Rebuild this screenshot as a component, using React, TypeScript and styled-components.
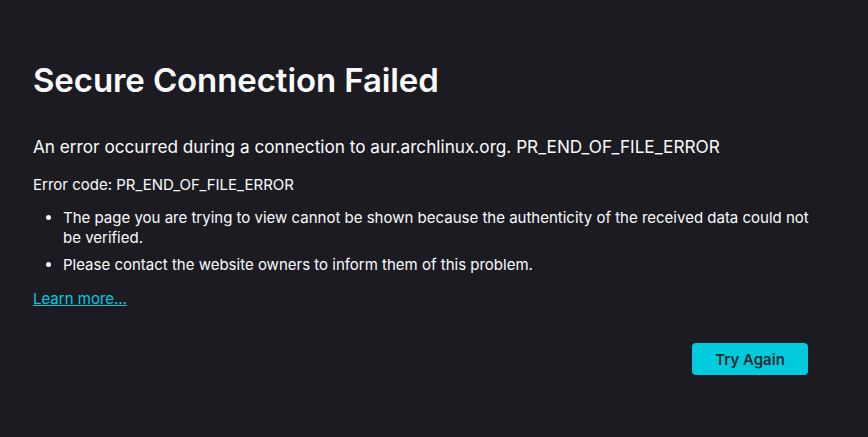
import React from 'react';
import styled, { createGlobalStyle } from 'styled-components';

const Global = createGlobalStyle`
  html, body {
    margin: 0;
    padding: 0;
    background: #1c1b22;
    color: #fbfbfe;
    font-family: Inter, "Noto Sans", sans-serif;
  }
`;

const Page = styled.main`
  width: 868px;
  height: 437px;
  box-sizing: border-box;
  padding: 58px 0 0 33px;
`;

const Container = styled.div`
  width: 785px;
  display: flex;
  flex-direction: column;
`;

const Title = styled.h1`
  margin: 0;
  font-size: 33px;
  font-weight: 600;
  line-height: 44px;
  letter-spacing: -0.1px;
`;

const ShortDesc = styled.p`
  margin: 33px 0 0;
  font-size: 17.2px;
  line-height: 24px;
`;

const ErrorCode = styled.p`
  margin: 16px 0 0;
  font-size: 15px;
  line-height: 20px;
`;

const List = styled.ul`
  margin: 13px 0 0;
  padding-left: 30px;
  font-size: 15px;
  line-height: 20px;

  li + li {
    margin-top: 7px;
  }
`;

const LearnMore = styled.a`
  margin-top: 14px;
  align-self: flex-start;
  color: #00cbe0;
  font-size: 15px;
  line-height: 20px;
  text-decoration: underline;
`;

const Actions = styled.div`
  display: flex;
  justify-content: flex-end;
  margin-top: 34px;
  padding-right: 10px;
`;

const Button = styled.button`
  width: 116px;
  height: 32px;
  border: none;
  border-radius: 4px;
  background: #00cadb;
  color: #2b2a33;
  font-family: Inter, sans-serif;
  font-size: 15px;
  font-weight: 600;
`;

export default function App() {
  return (
    <>
      <Global />
      <Page>
        <Container>
          <Title>Secure Connection Failed</Title>
          <ShortDesc>An error occurred during a connection to aur.archlinux.org. PR_END_OF_FILE_ERROR</ShortDesc>
          <ErrorCode>Error code: PR_END_OF_FILE_ERROR</ErrorCode>
          <List>
            <li>The page you are trying to view cannot be shown because the authenticity of the received data could not be verified.</li>
            <li>Please contact the website owners to inform them of this problem.</li>
          </List>
          <LearnMore href="#">Learn more…</LearnMore>
          <Actions>
            <Button>Try Again</Button>
          </Actions>
        </Container>
      </Page>
    </>
  );
}
